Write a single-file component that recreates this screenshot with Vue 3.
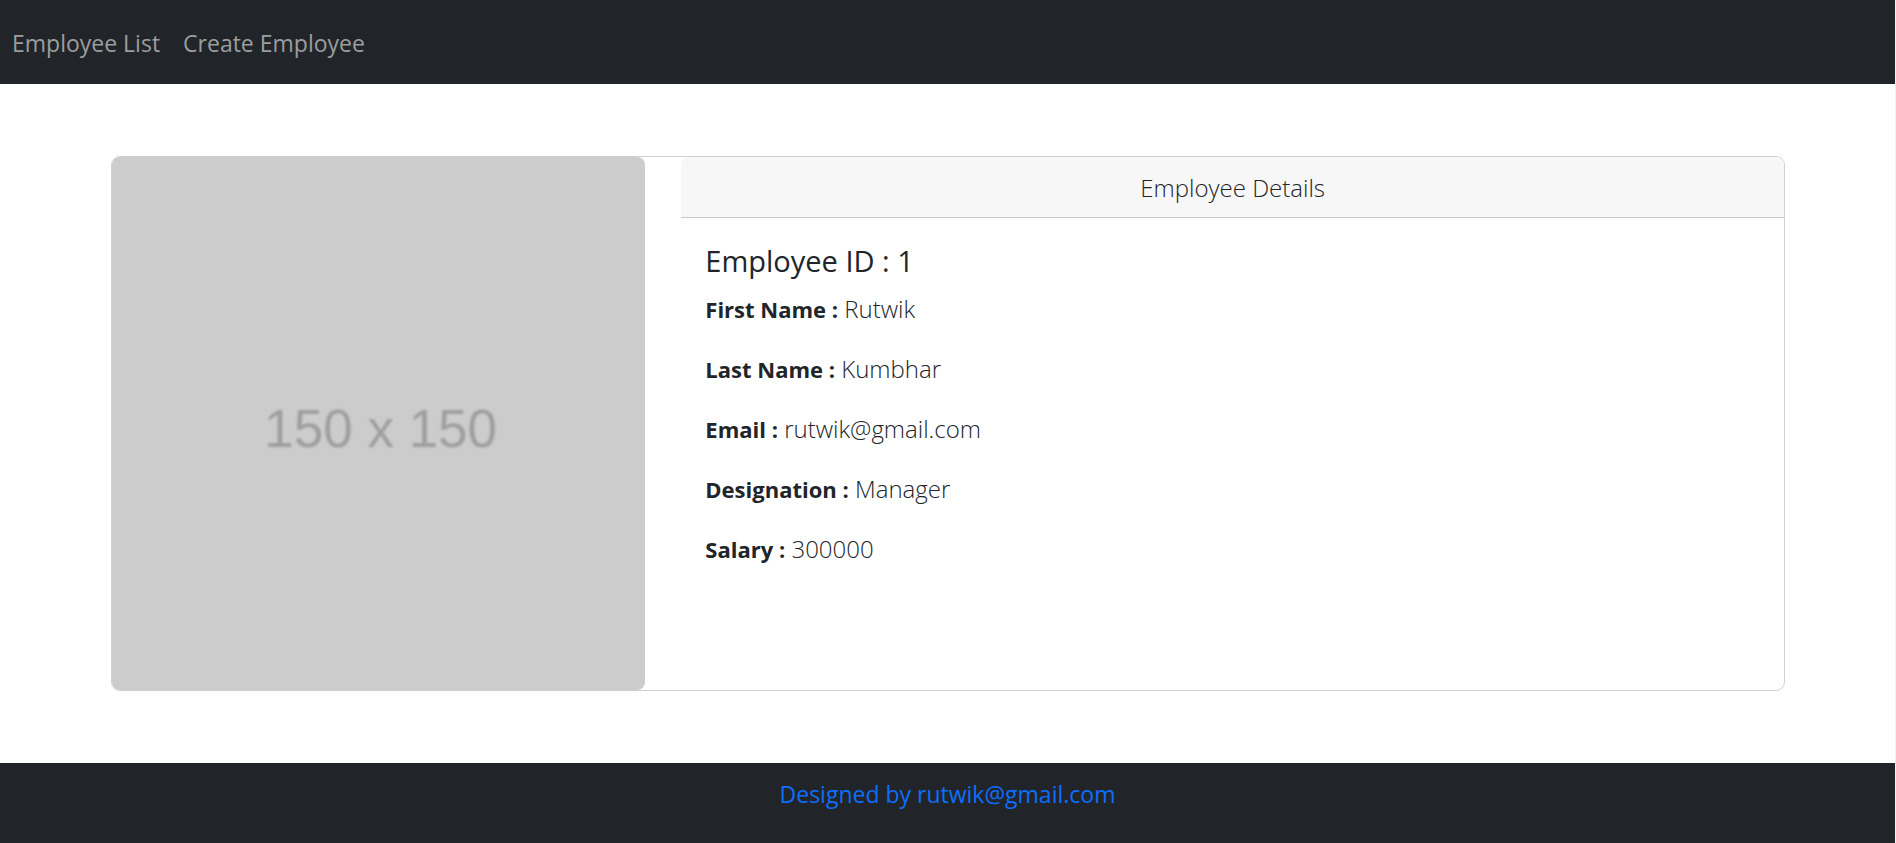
<script setup>
const links = ['Employee List', 'Create Employee']
const fields = [
  { label: 'First Name', value: 'Rutwik' },
  { label: 'Last Name', value: 'Kumbhar' },
  { label: 'Email', value: 'rutwik@gmail.com' },
  { label: 'Designation', value: 'Manager' },
  { label: 'Salary', value: '300000' },
]
</script>

<template>
  <div class="page">
    <nav class="navbar">
      <a v-for="link in links" :key="link" href="#" class="nav-link">{{ link }}</a>
    </nav>
    <main class="main">
      <article class="card">
        <div class="photo"><span class="photo-text">150 x 150</span></div>
        <section class="details">
          <header class="card-header">Employee Details</header>
          <div class="card-body">
            <h5 class="title">Employee ID : 1</h5>
            <p v-for="field in fields" :key="field.label" class="field">
              <strong>{{ field.label }} :</strong> {{ field.value }}
            </p>
          </div>
        </section>
      </article>
    </main>
    <footer class="footer">
      <a href="#" class="footer-link">Designed by rutwik@gmail.com</a>
    </footer>
  </div>
</template>

<style>
body {
  margin: 0;
  background: #fff;
}
</style>

<style scoped>
.page {
  box-sizing: border-box;
  min-height: 100vh;
  display: flex;
  flex-direction: column;
  border-right: 1px solid #f0f0f0;
  font-family: "Segoe UI", "Open Sans", "Noto Sans", sans-serif;
  font-size: 23px;
  line-height: 36px;
  color: #212529;
}
.navbar {
  display: flex;
  padding: 13px 0 11px;
  background: #212529;
}
.nav-link {
  padding: 12px 11px 12px 12px;
  color: #9b9d9e;
  text-decoration: none;
}
.main {
  padding: 72px 110px 72px 111px;
}
.card {
  display: grid;
  grid-template-columns: repeat(12, 1fr);
  column-gap: 36px;
  border: 1px solid #d0d0d1;
  border-radius: 9px;
}
.photo {
  grid-column: span 4;
  box-sizing: border-box;
  aspect-ratio: 1;
  padding: 11px 0 0 4px;
  display: flex;
  align-items: center;
  justify-content: center;
  border-radius: 8px;
  background: #ccc;
}
.photo-text {
  font-family: "Liberation Sans", Arial, sans-serif;
  font-size: 53px;
  line-height: 60px;
  color: #9f9f9f;
  filter: blur(1px);
}
.details {
  grid-column: span 8;
}
.card-header {
  padding: 13px 24px 11px;
  border-bottom: 1px solid #c8c8c9;
  border-radius: 8px 8px 0 0;
  background: #f7f7f7;
  text-align: center;
  font-size: 24px;
  font-weight: 300;
}
.card-body {
  padding: 25px 24px 23px;
}
.title {
  margin: 0 0 12px;
  font-size: 29px;
  line-height: 36px;
  font-weight: 500;
}
.field {
  margin: 0 0 24px;
  font-size: 24px;
  font-weight: 300;
}
.field strong {
  font-size: 22px;
  font-weight: 700;
}
.footer {
  flex: 1;
  padding: 13px 0 11px;
  box-sizing: border-box;
  background: #212529;
  text-align: center;
}
.footer-link {
  color: #0d6efd;
  text-decoration: none;
}
</style>
